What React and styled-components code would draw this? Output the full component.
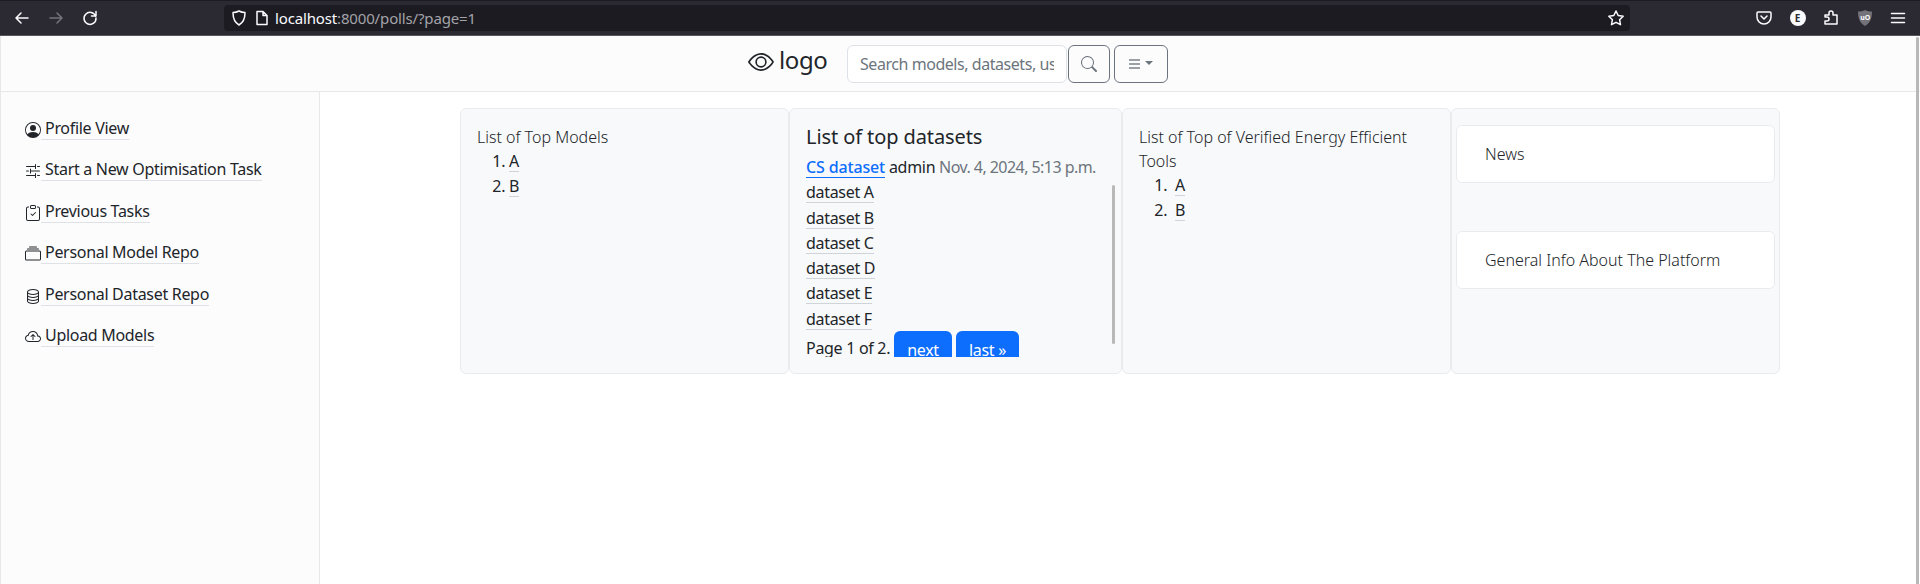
import React from "react";
import styled, { createGlobalStyle } from "styled-components";
import { BsPersonCircle, BsSliders2, BsClipboardCheck, BsCollection, BsDatabase, BsCloudArrowUp, BsEye, BsSearch } from "react-icons/bs";

const Global = createGlobalStyle`
  html, body { margin: 0; height: 100%; overflow: hidden; background: #fff; }
  body { font-family: "Noto Sans", "Open Sans", sans-serif; font-size: 16px; color: #212529; letter-spacing: -0.3px; }
  * { box-sizing: border-box; }
`;
const Page = styled.div`display: flex; flex-direction: column; height: 584px; width: 1920px; position: relative;`;
const Browser = styled.div`
  height: 36px; flex: none; background: #2b2a33; border-top: 1px solid #1c1b22; border-bottom: 1px solid #55555c;
  display: flex; align-items: center; color: #fbfbfe; padding-left: 13px;
`;
const NavGroup = styled.div`display: flex; align-items: center; gap: 16px; width: 211px; flex: none;`;
const ChromeIcon = styled.svg`width: 18px; height: 18px; flex: none; fill: none; stroke: ${p => p.$dim ? "#74737a" : "#fbfbfe"}; stroke-width: 1.5; stroke-linecap: round; stroke-linejoin: round;`;
const ShieldMark = styled.svg`width: 18px; height: 18px; flex: none; text { fill: #fbfbfe; font-size: 7px; font-weight: 700; letter-spacing: 0; }`;
const UrlBar = styled.div`
  width: 1406px; height: 26px; flex: none; background: #1c1b22; border-radius: 4px; display: flex; align-items: center;
  padding: 0 5px 0 6px; gap: 5px;
`;
const Url = styled.span`flex: 1; color: #fbfbfe; font-size: 15px; letter-spacing: -0.15px; margin-left: -1px; span { color: #a3a3a8; }`;
const Tools = styled.div`display: flex; align-items: center; gap: 15.5px; margin-left: 125px;`;
const Badge = styled.span`
  width: 16px; height: 16px; border-radius: 50%; background: #fbfbfe; color: #2b2a33; font-size: 10px; font-weight: 700; letter-spacing: 0;
  display: flex; align-items: center; justify-content: center; margin: 0 1px;
`;
const Navbar = styled.div`
  height: 56px; flex: none; background: #fcfcfd; border-bottom: 1px solid #e6e8ea; border-left: 1px solid #e6e8ea;
  display: flex; align-items: center; padding-left: 747px;
`;
const Brand = styled.a`display: flex; align-items: center; gap: 5px; font-size: 24px; color: #212529; margin-right: 18px; width: 81px; line-height: 1; padding-bottom: 3px;`;
const BrandText = styled.span`margin-top: -5px; letter-spacing: -0.4px;`;
const SearchInput = styled.div`
  width: 220px; height: 38px; border: 1px solid #dee2e6; background: #fff; border-radius: 6px; padding: 0 12px;
  display: flex; align-items: center; color: #6c757d;
`;
const Placeholder = styled.span`white-space: nowrap; overflow: hidden; width: 100%; letter-spacing: -0.45px;`;
const OutlineBtn = styled.div`
  height: 38px; width: ${p => p.$w}px; margin-left: ${p => p.$ml}px; border: 1px solid #6c757d; border-radius: 6px;
  display: flex; align-items: center; justify-content: center; gap: 5px; color: #6c757d;
`;
const Lines = styled.span`width: 11px; height: 10px; border-top: 2px solid #9aa0a6; border-bottom: 2px solid #9aa0a6; position: relative;
  &::after { content: ""; position: absolute; left: 0; right: 0; top: 2px; height: 2px; background: #9aa0a6; }`;
const Caret = styled.span`width: 0; height: 0; border: 4px solid transparent; border-top-color: #6c757d; border-bottom: 0; margin-bottom: 2px;`;
const Body = styled.div`flex: 1; display: flex; min-height: 0;`;
const Sidebar = styled.nav`
  width: 320px; flex: none; background: #fcfcfd; border-left: 1px solid #e6e8ea; border-right: 1px solid #e6e8ea;
  padding: 26px 0 0 24px; display: flex; flex-direction: column; gap: 17.4px;
`;
const SideLink = styled.a`
  display: flex; align-items: flex-end; height: 24px; width: fit-content; color: #212529;
  svg { width: 16px; height: 16px; flex: none; color: #212529; margin-bottom: 4px; }
`;
const SideLabel = styled.span`line-height: 21px; padding-left: 4px; border-bottom: 1px solid #dee2e6; margin-bottom: 2px;`;
const Main = styled.main`flex: 1; display: flex; justify-content: center; padding-top: 16px;`;
const Cards = styled.div`display: grid; grid-template-columns: 329px 333px 329px 329px; height: 266px;`;
const Card = styled.section`
  background: #f8f9fa; border: 1px solid #e9ecef; border-radius: 6px; padding: 16px; min-width: 0; position: relative; overflow: hidden;
`;
const CardText = styled.div`line-height: 24px; color: #212529; font-weight: 300; letter-spacing: 0;`;
const OrderedList = styled.ol`margin: 0; padding-left: 32px; li { height: 25px; line-height: 24px; padding-left: ${p => p.$gap || 0}px; }`;
const Item = styled.a`display: inline-block; line-height: 19px; color: #212529; border-bottom: 1px solid #ced4da;`;
const Title = styled.h5`font-size: 20px; font-weight: 400; letter-spacing: -0.1px; margin: 0 0 6px; line-height: 24px;`;
const Entry = styled.div`height: 25.3px; line-height: 24px; white-space: nowrap;`;
const BlueLink = styled.a`display: inline-block; line-height: 20px; color: #0d6efd; font-weight: 500; letter-spacing: -0.15px; border-bottom: 1px solid #0d6efd;`;
const Muted = styled.span`color: #6c757d; letter-spacing: -0.55px;`;
const Pager = styled.div`display: flex; gap: 4px; height: 26px; overflow: hidden; align-items: flex-start; margin-top: -1px; white-space: nowrap;`;
const PagerText = styled.span`line-height: 18px; margin-top: 8px; width: 84px; flex: none;`;
const PagerBtn = styled.a`background: #0d6efd; color: #fff; border-radius: 6px; padding: 7px 0; height: 38px; line-height: 24px; flex: none; width: ${p => p.$w}px; text-align: center;`;
const ThinBar = styled.div`position: absolute; right: 6px; top: 76px; width: 3px; height: 159px; background: #b8b8b8; border-radius: 2px;`;
const SideCards = styled(Card)`padding: 16px 4px; display: flex; flex-direction: column; gap: 48px;`;
const Tile = styled.div`background: #fff; border: 1px solid #e9ecef; border-radius: 6px; height: 58px; display: flex; align-items: center; padding-left: 28px; font-weight: 300; letter-spacing: 0;`;
const PageScroll = styled.div`position: absolute; right: 1px; top: 37px; bottom: 0; width: 3px; background: #b8b8b8; border-radius: 2px 2px 0 0;`;

const links = [
  [BsPersonCircle, "Profile View"], [BsSliders2, "Start a New Optimisation Task"], [BsClipboardCheck, "Previous Tasks"],
  [BsCollection, "Personal Model Repo"], [BsDatabase, "Personal Dataset Repo"], [BsCloudArrowUp, "Upload Models"],
];

export default function App() {
  return (
    <Page>
      <Global />
      <Browser>
        <NavGroup>
          <ChromeIcon viewBox="0 0 18 18"><path d="M15 9H3M8 4 3 9l5 5" /></ChromeIcon>
          <ChromeIcon viewBox="0 0 18 18" $dim><path d="M3 9h12M10 4l5 5-5 5" /></ChromeIcon>
          <ChromeIcon viewBox="0 0 18 18"><path d="M14.6 7.2A6 6 0 1 0 15 9M15 2.5v4.5h-4.5" /></ChromeIcon>
        </NavGroup>
        <UrlBar>
          <ChromeIcon viewBox="0 0 18 18"><path d="M9 2c2 1.2 4 1.6 6 1.6 0 6-1.5 10-6 12.4C4.500 13.600 3 9.600 3 3.600 5 3.600 7 3.200 9 2z" /></ChromeIcon>
          <ChromeIcon viewBox="0 0 18 18"><path d="M4 2.500h6l4 4v9H4zM10 2.500v4h4" /></ChromeIcon>
          <Url>localhost<span>:8000/polls/?page=1</span></Url>
          <ChromeIcon viewBox="0 0 18 18"><path d="m9 2 2.200 4.500 5 .7-3.600 3.500.9 5L9 13.300 4.500 15.700l.9-5L1.800 7.200l5-.7z" /></ChromeIcon>
        </UrlBar>
        <Tools>
          <ChromeIcon viewBox="0 0 18 18"><path d="M3 3h12a1 1 0 0 1 1 1v4a7 7 0 0 1-14 0V4a1 1 0 0 1 1-1zM6 7l3 3 3-3" /></ChromeIcon>
          <Badge>E</Badge>
          <ChromeIcon viewBox="0 0 18 18"><path d="M3 6h4V4a2 2 0 0 1 4 0v2h4v9H3v-3h2a2 2 0 0 0 0-4H3z" /></ChromeIcon>
          <ShieldMark viewBox="0 0 18 18"><path fill="#74737a" d="M9 1c2 1 4.500 1.500 7 1.500 0 7-2 11.500-7 14.500C4 14 2 9.500 2 2.500 4.500 2.500 7 2 9 1z" /><text x="4.200" y="10.500">uO</text></ShieldMark>
          <ChromeIcon viewBox="0 0 18 18"><path d="M2.500 4.500h13M2.500 9h13M2.500 13.500h13" /></ChromeIcon>
        </Tools>
      </Browser>
      <Navbar>
        <Brand><BsEye size={26} /><BrandText>logo</BrandText></Brand>
        <SearchInput><Placeholder>Search models, datasets, users</Placeholder></SearchInput>
        <OutlineBtn $w={42} $ml={1}><BsSearch size={16} /></OutlineBtn>
        <OutlineBtn $w={54} $ml={4}><Lines /><Caret /></OutlineBtn>
      </Navbar>
      <Body>
        <Sidebar>
          {links.map(([Icon, label]) => (
            <SideLink key={label}><Icon /><SideLabel>{label}</SideLabel></SideLink>
          ))}
        </Sidebar>
        <Main>
          <Cards>
            <Card>
              <CardText>List of Top Models</CardText>
              <OrderedList><li><Item>A</Item></li><li><Item>B</Item></li></OrderedList>
            </Card>
            <Card>
              <Title>List of top datasets</Title>
              <Entry><BlueLink>CS dataset</BlueLink> admin <Muted>Nov. 4, 2024, 5:13 p.m.</Muted></Entry>
              {["A", "B", "C", "D", "E", "F"].map(l => <Entry key={l}><Item>dataset {l}</Item></Entry>)}
              <Pager>
                <PagerText>Page 1 of 2.</PagerText>
                <PagerBtn $w={58}>next</PagerBtn>
                <PagerBtn $w={63}>last »</PagerBtn>
              </Pager>
              <ThinBar />
            </Card>
            <Card>
              <CardText>List of Top of Verified Energy Efficient Tools</CardText>
              <OrderedList $gap={4}><li><Item>A</Item></li><li><Item>B</Item></li></OrderedList>
            </Card>
            <SideCards>
              <Tile>News</Tile>
              <Tile>General Info About The Platform</Tile>
            </SideCards>
          </Cards>
        </Main>
      </Body>
      <PageScroll />
    </Page>
  );
}
